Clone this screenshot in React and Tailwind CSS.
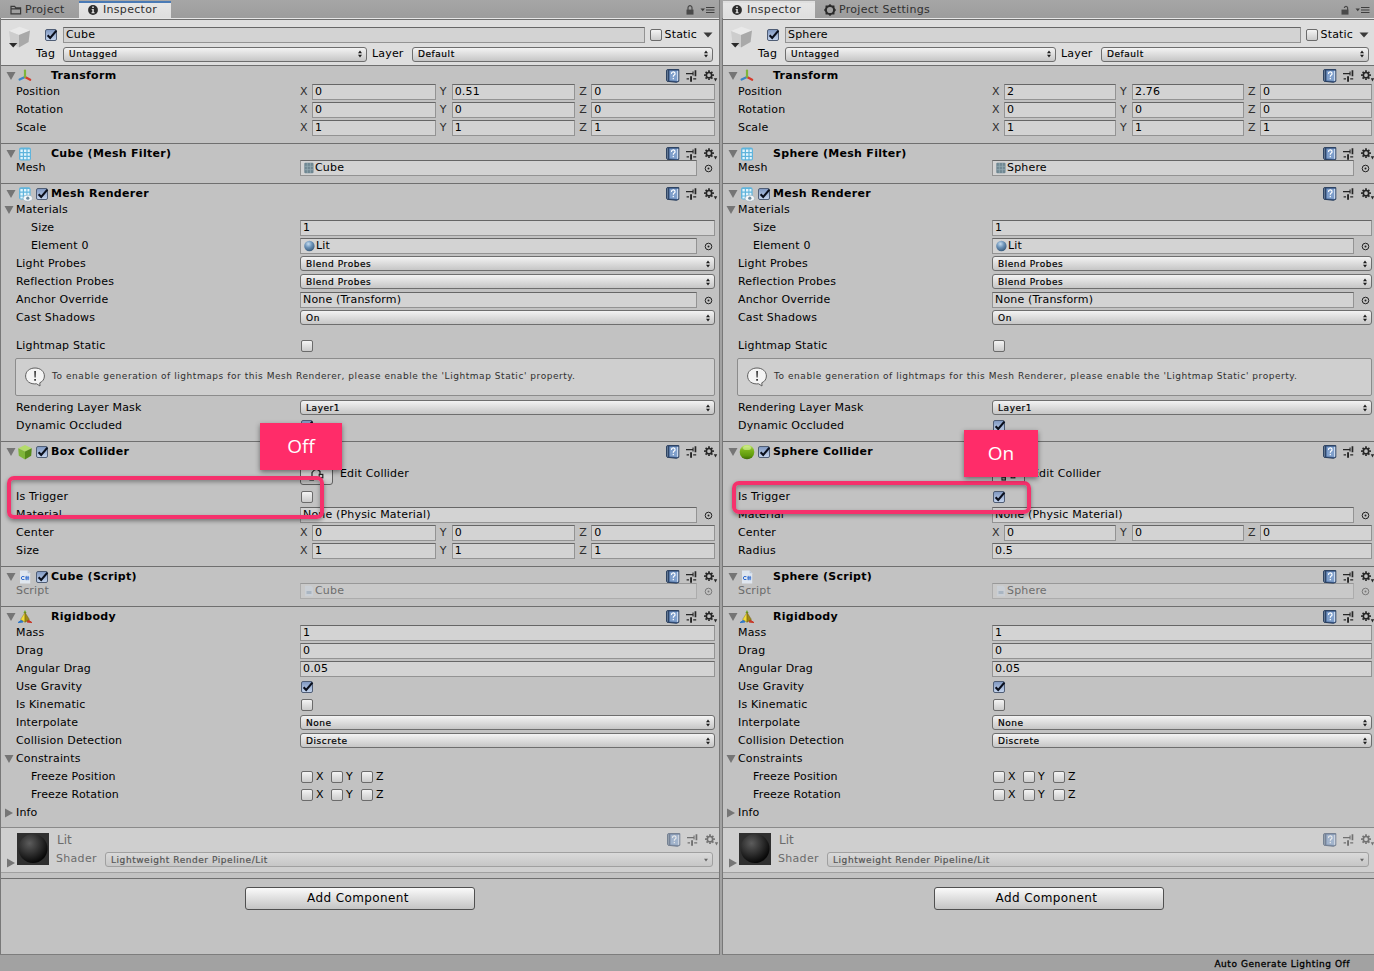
import clsx from "clsx";

const textNormal = "text-[11px] leading-[14px] tracking-[0.17px] whitespace-nowrap";
const textSmall =
  "text-[9px] leading-[12px] tracking-[0.55px] whitespace-nowrap [-webkit-text-stroke:0.2px]";

/* ---------- icons ---------- */

function Foldout({ open = true, className }) {
  return (
    <svg width="10" height="10" viewBox="0 0 10 10" className={clsx("shrink-0", className)}>
      <path d={open ? "M0.5 1 H9.5 L5 9 Z" : "M1 0.5 V9.5 L9 5 Z"} fill="#757575" />
    </svg>
  );
}

function FolderIcon() {
  return (
    <svg width="12" height="10" viewBox="0 0 12 10" fill="none" stroke="#3a3a3a" strokeWidth="1.2">
      <path d="M1 8.9 V1.3 H4.6 L5.8 2.8 H10.6 V8.9 Z M1 3.8 H10.6" />
    </svg>
  );
}

function InfoIcon() {
  return (
    <svg width="10" height="10" viewBox="0 0 10 10">
      <circle cx="5" cy="5" r="4.9" fill="#2b2b2b" />
      <path d="M4.2 1.6 H5.8 V3 H4.2 Z M3.6 4 H5.8 V7.3 H6.6 V8.2 H3.5 V7.3 H4.3 V4.8 H3.6 Z" fill="#e4e4e4" />
    </svg>
  );
}

function SettingsIcon() {
  return (
    <svg width="12" height="12" viewBox="0 0 12 12">
      <path
        d="M6 0 L7.8 1.4 L10.4 1.6 L10.6 4 L12 6 L10.6 8 L10.4 10.4 L7.8 10.6 L6 12 L4.2 10.6 L1.6 10.4 L1.4 8 L0 6 L1.4 4 L1.6 1.6 L4.2 1.4 Z M6 2.9 A3.1 3.1 0 1 0 6 9.1 A3.1 3.1 0 1 0 6 2.9 Z"
        fill="#2b2b2b"
        fillRule="evenodd"
      />
    </svg>
  );
}

function LockIcon({ open }) {
  return (
    <svg width="8" height="10" viewBox="0 0 8 10">
      <rect x="0.5" y="4.6" width="7" height="5" fill="#4a4a4a" />
      <path
        d={open ? "M3.4 3 V2.6 A1.7 1.9 0 0 1 6.6 2.6 V5" : "M2 5 V2.8 A2 2.1 0 0 1 6 2.8 V5"}
        fill="none"
        stroke="#4a4a4a"
        strokeWidth="1.2"
      />
    </svg>
  );
}

function MenuIcon() {
  return (
    <svg width="15" height="8" viewBox="0 0 15 8" fill="#3f3f3f">
      <path d="M0.5 2.5 H5 L2.75 5.2 Z M6 1 H14.5 V2 H6 Z M6 3.5 H14.5 V4.5 H6 Z M6 6 H14.5 V7 H6 Z" />
    </svg>
  );
}

function HelpIcon() {
  return (
    <svg width="14" height="14" viewBox="0 0 14 14">
      <path d="M0.5 1.2 L2 0.5 V12.6 L0.5 11.6 Z" fill="#cfe0f5" stroke="#1d3353" strokeWidth="0.9" />
      <path d="M2.2 0.6 H12.8 V12.2 L10.6 13.3 L2.2 12.4 Z" fill="#41608f" stroke="#1d3353" strokeWidth="0.9" />
      <path d="M3.6 1.8 H11 V12 L3.6 11.4 Z" fill="#7f9fcb" />
      <path d="M11 1.8 H12.3 V11.6 L11 12.2 Z" fill="#c8d8ee" />
      <path d="M5.5 5 A1.8 1.7 0 1 1 8 6.2 Q7.3 6.7 7.3 7.8" fill="none" stroke="#fff" strokeWidth="1.2" />
      <rect x="6.7" y="8.9" width="1.2" height="1.3" fill="#fff" />
    </svg>
  );
}

function PresetIcon() {
  return (
    <svg width="11" height="12" viewBox="0 0 11 12" fill="#262626">
      <path d="M0 3 H6.5 V4.3 H0 Z M6.5 1.6 H7.6 V5.6 H6.5 Z M8.6 0.3 H10.3 V6.2 H8.6 Z M0.6 8.3 H3 V9.6 H0.6 Z M4.1 6.2 H6 V11.8 H4.1 Z M7.2 8.3 H10.2 V9.6 H7.2 Z" />
    </svg>
  );
}

function GearIcon() {
  return (
    <svg width="14" height="12" viewBox="0 0 14 12">
      <g stroke="#262626" fill="none">
        <circle cx="5" cy="5.2" r="2.7" strokeWidth="1.7" />
        <path
          strokeWidth="1.7"
          d="M5 0.3 V2 M5 8.4 V10.1 M0.1 5.2 H1.8 M8.2 5.2 H9.9 M1.6 1.8 L2.8 3 M7.2 7.4 L8.4 8.6 M8.4 1.8 L7.2 3 M2.8 7.4 L1.6 8.6"
        />
      </g>
      <path d="M9.8 8.2 H13.2 L11.5 11.4 Z" fill="#262626" />
    </svg>
  );
}

function GameObjectIcon() {
  return (
    <svg width="24" height="24" viewBox="0 0 24 24">
      <path d="M1 5 L11.5 0.8 L22 4.6 L11 9 Z" fill="#e9e9e9" />
      <path d="M1 5 L11 9 V21.6 L2.4 16.4 Z" fill="#cdcdcd" />
      <path d="M22 4.6 L11 9 V21.6 L20.6 16 Z" fill="#a9a9a9" />
      <path d="M1 17 H9.4 L5.2 21.4 Z" fill="#2a2a2a" />
    </svg>
  );
}

function TransformIcon() {
  return (
    <svg width="16" height="16" viewBox="0 0 16 16" fill="none" strokeWidth="2.2" strokeLinecap="round">
      <path d="M8 9 L2.6 11.6" stroke="#3d86c6" />
      <path d="M8 9 L13.2 11.8" stroke="#d63b2c" />
      <path d="M8 9 V2.6" stroke="#7fb53a" />
    </svg>
  );
}

function MeshFilterIcon() {
  return (
    <svg width="16" height="16" viewBox="0 0 16 16">
      <rect x="2" y="1.5" width="12" height="13" rx="2" fill="#5fb4dc" />
      <path
        d="M3.4 3.4 H5.8 V6 H3.4 Z M7 3.4 H9.4 V6 H7 Z M10.6 3.4 H12.8 V6 H10.6 Z M3.4 7.2 H5.8 V9.8 H3.4 Z M7 7.2 H9.4 V9.8 H7 Z M10.6 7.2 H12.8 V9.8 H10.6 Z M3.4 11 H5.8 V13.2 H3.4 Z M7 11 H9.4 V13.2 H7 Z M10.6 11 H12.8 V13.2 H10.6 Z"
        fill="#e3f5fd"
      />
    </svg>
  );
}

function MeshRendererIcon() {
  return (
    <svg width="16" height="16" viewBox="0 0 16 16">
      <rect x="2" y="1.2" width="11.6" height="12.4" rx="2" fill="#5fb4dc" />
      <path
        d="M3.4 3 H5.8 V5.6 H3.4 Z M7 3 H9.4 V5.6 H7 Z M10.4 3 H12.4 V5.6 H10.4 Z M3.4 6.8 H5.8 V9.4 H3.4 Z M7 6.8 H9.4 V9.4 H7 Z M10.4 6.8 H12.4 V9.4 H10.4 Z M3.4 10.6 H5.8 V12.6 H3.4 Z"
        fill="#e3f5fd"
      />
      <ellipse cx="10.8" cy="12.2" rx="4.6" ry="3" fill="#f6f8fa" stroke="#8ea9b8" strokeWidth="0.5" />
      <circle cx="10.8" cy="12.2" r="1.6" fill="#6e8ea2" />
    </svg>
  );
}

function BoxIcon() {
  return (
    <svg width="16" height="16" viewBox="0 0 16 16">
      <path d="M1.2 4.2 L8 1 L14.8 4.2 L8 7.4 Z" fill="#b4dc6a" />
      <path d="M1.2 4.2 L8 7.4 V15.4 L1.8 11.8 Z" fill="#7fb53a" />
      <path d="M14.8 4.2 L8 7.4 V15.4 L14.2 11.8 Z" fill="#568a1c" />
    </svg>
  );
}

function SphereIcon() {
  return (
    <svg width="16" height="16" viewBox="0 0 16 16">
      <defs>
        <linearGradient id="sphereGreen" x1="0" y1="0" x2="0" y2="1">
          <stop offset="0" stopColor="#c9ea7c" />
          <stop offset="0.35" stopColor="#7db61c" />
          <stop offset="0.75" stopColor="#5f9a0c" />
          <stop offset="1" stopColor="#3d6b05" />
        </linearGradient>
      </defs>
      <circle cx="8" cy="8" r="7.3" fill="url(#sphereGreen)" />
      <ellipse cx="8" cy="3.9" rx="4" ry="2.2" fill="#d9f39c" opacity="0.6" />
    </svg>
  );
}

function ScriptIcon() {
  return (
    <svg width="16" height="16" viewBox="0 0 16 16">
      <path d="M3 1.5 H10.6 L13.2 4.2 V14.5 H3 Z" fill="#dfe6ef" />
      <path d="M10.6 1.5 V4.2 H13.2 Z" fill="#b9c6d6" />
      <g fill="none" stroke="#2f6bd0" strokeWidth="1">
        <path d="M7.4 7.6 Q4.2 6.8 4.2 9 Q4.2 11.3 7.4 10.5" />
        <path d="M9.3 6.9 V11.2 M11.1 6.9 V11.2 M8.2 8.3 H12.2 M8.2 9.9 H12.2" strokeWidth="0.8" />
      </g>
    </svg>
  );
}

function RigidbodyIcon() {
  return (
    <svg width="16" height="16" viewBox="0 0 16 16">
      <path d="M8 1 L9.6 4 H6.4 Z" fill="#6fae2c" />
      <path d="M1 13.6 L5 10.8 L6 13 Z" fill="#2f78c8" stroke="#2f78c8" strokeWidth="1" />
      <path d="M15 13.6 L11 10.8 L10 13 Z" fill="#c83a2a" stroke="#c83a2a" strokeWidth="1" />
      <path d="M8 3.4 L3.6 10.4 L8 13.2 Z" fill="#f4dd3a" stroke="#7a6a10" strokeWidth="0.4" />
      <path d="M8 3.4 L12.4 10.4 L8 13.2 Z" fill="#a08a14" stroke="#5b4e0a" strokeWidth="0.4" />
    </svg>
  );
}

function MiniMesh() {
  return (
    <svg width="10" height="12" viewBox="0 0 10 12">
      <rect x="0.3" y="0.8" width="9.2" height="10.4" rx="1" fill="#6f8792" />
      <path d="M3.3 1 V11 M6.4 1 V11 M0.5 4.3 H9.3 M0.5 7.7 H9.3" stroke="#93a9b3" strokeWidth="0.8" />
    </svg>
  );
}

function MiniMaterial() {
  return (
    <svg width="11" height="12" viewBox="0 0 11 12">
      <defs>
        <radialGradient id="matBlue" cx="0.4" cy="0.3" r="0.7">
          <stop offset="0" stopColor="#c4dcf0" />
          <stop offset="0.5" stopColor="#6c93b8" />
          <stop offset="1" stopColor="#3d5f80" />
        </radialGradient>
      </defs>
      <circle cx="5.4" cy="6" r="5.2" fill="url(#matBlue)" />
    </svg>
  );
}

function MiniScript() {
  return (
    <svg width="10" height="12" viewBox="0 0 10 12">
      <path d="M1 0.8 H7 L9 2.8 V11.2 H1 Z" fill="#d5e0ec" />
      <path d="M2.5 6 H7.5 V9 H2.5 Z" fill="#8da6c4" />
    </svg>
  );
}

function BubbleIcon() {
  return (
    <svg width="22" height="22" viewBox="0 0 22 22">
      <path
        d="M11 2 C16.4 2 20.4 5.4 20.4 10 C20.4 13.2 18.6 15.6 15.8 16.8 L16 20 L12.6 17.8 C6 18.6 1.6 15 1.6 10 C1.6 5.4 5.6 2 11 2 Z"
        fill="#f4f4f4"
        stroke="#5f5f5f"
        strokeWidth="1"
      />
      <path d="M10.2 5 H12 L11.7 11.6 H10.5 Z M10.2 13 H12 V14.8 H10.2 Z" fill="#3c3c3c" />
    </svg>
  );
}

function EditColliderIcon() {
  return (
    <svg width="17" height="15" viewBox="0 0 17 15" fill="none" stroke="#222" strokeWidth="1.2">
      <path d="M4 12.5 V6.5 Q8 1 12 5.5 V8.5" />
      <rect x="2" y="11" width="3.4" height="3" />
      <rect x="11.2" y="8.4" width="3.6" height="3.4" />
    </svg>
  );
}

/* ---------- controls ---------- */

function Checkbox({ checked }) {
  return (
    <span
      className={clsx(
        "block w-3 h-3 shrink-0 rounded-[2px] border",
        checked
          ? "border-[#4f5d75] bg-linear-to-b from-[#8199c2] to-[#c3d3ec]"
          : "border-[#6b6b6b] bg-linear-to-b from-[#f4f4f4] to-[#cbcbcb]"
      )}
    >
      {checked && (
        <svg width="13" height="12" viewBox="0 0 13 12" className="block -mt-px -ml-px">
          <path d="M2.6 6.2 L5.2 9 L11.4 1.6" fill="none" stroke="#0a0f1c" strokeWidth="2.1" />
        </svg>
      )}
    </span>
  );
}

function Field({ children, className }) {
  return (
    <div
      className={clsx(
        "h-4 min-w-0 flex-1 flex items-center gap-px pl-[2px] bg-[#d3d3d3] border border-[#939393] border-t-[#666666]",
        textNormal,
        className
      )}
    >
      {children}
    </div>
  );
}

function Select({ children, muted, className }) {
  return (
    <div
      className={clsx(
        "h-[15px] min-w-0 flex items-center justify-between pl-[5px] pr-[3px] rounded-[3px] border",
        muted
          ? "border-[#a0a0a0] bg-linear-to-b from-[#dadada] to-[#c6c6c6] text-[#555]"
          : "border-[#6e6e6e] bg-linear-to-b from-[#f3f3f3] to-[#c6c6c6]",
        textSmall,
        className
      )}
    >
      <span>{children}</span>
      <svg width="6" height="8" viewBox="0 0 6 8" fill={muted ? "#666" : "#1c1c1c"}>
        <path d={muted ? "M1 2.8 H5 L3 5.6 Z" : "M1 3.2 L3 0.4 L5 3.2 Z M1 4.8 H5 L3 7.6 Z"} />
      </svg>
    </div>
  );
}

function Row({ label, indent, foldout, muted, children }) {
  return (
    <div className="h-[18px] flex items-center">
      <div
        className={clsx(
          "w-(--label) shrink-0 flex items-center",
          textNormal,
          muted && "text-[#6b6b6b]",
          indent ? "pl-[30px]" : foldout ? "pl-[3px]" : "pl-[15px]"
        )}
      >
        {foldout && <Foldout open={foldout === "open"} className="mr-[2px]" />}
        {label}
      </div>
      {children}
    </div>
  );
}

function TextRow({ value, ...rest }) {
  return (
    <Row {...rest}>
      <Field>{value}</Field>
    </Row>
  );
}

function SelectRow({ value, ...rest }) {
  return (
    <Row {...rest}>
      <Select className="flex-1 mb-px">{value}</Select>
    </Row>
  );
}

function CheckRow({ checked, ...rest }) {
  return (
    <Row {...rest}>
      <div className="pl-px">
        <Checkbox checked={checked} />
      </div>
    </Row>
  );
}

function ObjectRow({ icon, value, muted, ...rest }) {
  return (
    <Row muted={muted} {...rest}>
      <div className={clsx("flex-1 flex items-center", muted && "opacity-45")}>
        <Field>
          {icon && <span className="pl-px">{icon}</span>}
          {value}
        </Field>
        <svg width="9" height="9" viewBox="0 0 9 9" className="ml-[7px] mr-[2px]">
          <circle cx="4.5" cy="4.5" r="3.3" fill="none" stroke="#222" strokeWidth="1" />
          <circle cx="4.5" cy="4.5" r="1" fill="#222" />
        </svg>
      </div>
    </Row>
  );
}

function VectorRow({ label, values }) {
  return (
    <Row label={label}>
      <div className="flex-1 grid grid-cols-3 gap-1">
        {["X", "Y", "Z"].map((axis, i) => (
          <div key={axis} className="flex items-center min-w-0">
            <span className={clsx("w-3 shrink-0 text-[#2e2e2e]", textNormal)}>{axis}</span>
            <Field>{values[i]}</Field>
          </div>
        ))}
      </div>
    </Row>
  );
}

function FreezeRow({ label }) {
  return (
    <Row label={label} indent>
      <div className={clsx("flex pl-px", textNormal)}>
        {["X", "Y", "Z"].map((axis) => (
          <span key={axis} className="w-[30px] flex items-center gap-[3px]">
            <Checkbox />
            {axis}
          </span>
        ))}
      </div>
    </Row>
  );
}

function HeaderIcons() {
  return (
    <div className="ml-auto -mr-[3px] flex items-center">
      <HelpIcon />
      <span className="ml-[6px]">
        <PresetIcon />
      </span>
      <span className="ml-[7px]">
        <GearIcon />
      </span>
    </div>
  );
}

function Component({ title, icon, enabled, tight, height, children }) {
  return (
    <section
      className={clsx("border-t border-[#6f6f6f] pr-(--edge) overflow-hidden", height)}
    >
      <div className={clsx("flex items-center pl-[5px]", tight ? "h-[15px] pt-[4px]" : "h-[17px] pt-[2px]")}>
        <Foldout />
        <span className="ml-px w-4">{icon}</span>
        <span className="ml-[3px] w-[15px]">{enabled && <Checkbox checked />}</span>
        <h2 className="font-bold text-[11px] leading-[14px] tracking-[0.3px] whitespace-nowrap">{title}</h2>
        <HeaderIcons />
      </div>
      {children}
    </section>
  );
}

/* ---------- panel ---------- */

function Tab({ active, focused, icon, children, className }) {
  return (
    <div
      className={clsx(
        "h-[17px] mt-px flex items-center border-t-2 pb-px text-[11px] tracking-[0.3px] whitespace-nowrap text-[#303030]",
        active ? "bg-linear-to-b from-[#e6e6e6] to-[#dedede]" : "",
        focused ? "border-[#4a7ab5]" : "border-transparent",
        className
      )}
    >
      {icon}
      {children}
    </div>
  );
}

function Inspector({ tabs, locked, name, collider, colliderIcon, trigger, shape, scriptEnabled, position, className, children }) {
  return (
    <div className={clsx("relative flex flex-col h-[955px] overflow-hidden bg-[#c2c2c2] border-b border-[#7d7d7d]", className)}>
      <div className="h-[18px] shrink-0 flex bg-linear-to-b from-[#a6a6a6] to-[#9c9c9c]">
        {tabs}
        <div className="ml-auto mr-(--tools) mt-px flex items-center gap-[6px]">
          <LockIcon open={!locked} />
          <MenuIcon />
        </div>
      </div>
      <div className="flex-1 flex flex-col border-l border-[#787878]">
        <header className="h-[47px] shrink-0 bg-[#dedede] border-t border-[#e6e6e6]">
          <div className="border-t border-[#6f6f6f] h-[46px] flex pl-[7px] pt-[6px] pr-(--header)">
            <GameObjectIcon />
            <div className="flex-1 flex flex-col">
              <div className="h-[18px] flex items-center">
                <span className="ml-[13px] mr-[6px]">
                  <Checkbox checked />
                </span>
                <Field className="tracking-[0.3px]">{name}</Field>
                <span className="ml-[5px] mr-[3px]">
                  <Checkbox />
                </span>
                <span className={textNormal}>Static</span>
                <svg width="10" height="6" viewBox="0 0 10 6" className="ml-[6px]">
                  <path d="M0.5 0.5 H9.5 L5 5.5 Z" fill="#3a3a3a" />
                </svg>
              </div>
              <div className="h-5 flex items-center">
                <span className={clsx("w-[31px] pl-[4px]", textNormal)}>Tag</span>
                <Select className="grow basis-[13px] ">Untagged</Select>
                <span className={clsx("w-[45px] pl-[5px]", textNormal)}>Layer</span>
                <Select className="grow basis-0">Default</Select>
              </div>
            </div>
          </div>
        </header>

        <Component title="Transform" icon={<TransformIcon />} height="h-[78px]">
          <VectorRow label="Position" values={position} />
          <VectorRow label="Rotation" values={["0", "0", "0"]} />
          <VectorRow label="Scale" values={["1", "1", "1"]} />
        </Component>

        <Component title={`${name} (Mesh Filter)`} icon={<MeshFilterIcon />} tight height="h-[40px]">
          <ObjectRow label="Mesh" icon={<MiniMesh />} value={name} />
        </Component>

        <Component title="Mesh Renderer" icon={<MeshRendererIcon />} enabled height="h-[258px]">
          <Row label="Materials" foldout="open" />
          <TextRow label="Size" indent value="1" />
          <ObjectRow label="Element 0" indent icon={<MiniMaterial />} value="Lit" />
          <SelectRow label="Light Probes" value="Blend Probes" />
          <SelectRow label="Reflection Probes" value="Blend Probes" />
          <ObjectRow label="Anchor Override" value="None (Transform)" />
          <SelectRow label="Cast Shadows" value="On" />
          <div className="pt-[10px]">
            <CheckRow label="Lightmap Static" />
          </div>
          <div className="mt-[3px] mb-[3px] ml-[14px] h-[38px] flex items-center gap-[6px] pl-[8px] rounded-[2px] border border-[#8c8c8c] bg-[#cfcfcf]">
            <BubbleIcon />
            <p className="text-[9px] tracking-[0.55px] whitespace-nowrap text-[#2e2e2e]">
              To enable generation of lightmaps for this Mesh Renderer, please enable the 'Lightmap Static' property.
            </p>
          </div>
          <SelectRow label="Rendering Layer Mask" value="Layer1" />
          <CheckRow label="Dynamic Occluded" checked />
        </Component>

        <Component title={collider} icon={colliderIcon} enabled height="h-[125px]">
          <div className="h-[29px] flex items-center pl-(--label)">
            <span className="w-[33px] h-[23px] flex items-center justify-center rounded-[3px] border border-[#5f5f5f] bg-linear-to-b from-[#f0f0f0] to-[#c6c6c6]">
              <EditColliderIcon />
            </span>
            <span className={clsx("pl-[7px]", textNormal)}>Edit Collider</span>
          </div>
          <CheckRow label="Is Trigger" checked={trigger} />
          <ObjectRow label="Material" value="None (Physic Material)" />
          <VectorRow label="Center" values={["0", "0", "0"]} />
          {shape}
        </Component>

        <Component title={`${name} (Script)`} icon={<ScriptIcon />} enabled={scriptEnabled} tight height="h-[40px]">
          <ObjectRow label="Script" icon={<MiniScript />} value={name} muted />
        </Component>

        <Component title="Rigidbody" icon={<RigidbodyIcon />} height="h-[221px]">
          <TextRow label="Mass" value="1" />
          <TextRow label="Drag" value="0" />
          <TextRow label="Angular Drag" value="0.05" />
          <CheckRow label="Use Gravity" checked />
          <CheckRow label="Is Kinematic" />
          <SelectRow label="Interpolate" value="None" />
          <SelectRow label="Collision Detection" value="Discrete" />
          <Row label="Constraints" foldout="open" />
          <FreezeRow label="Freeze Position" />
          <FreezeRow label="Freeze Rotation" />
          <Row label="Info" foldout="closed" />
        </Component>

        <section className="h-[46px] border-y border-t-[#8a8a8a] border-b-[#a0a0a0] bg-[#cfcfcf] flex pl-[5px] pr-(--header) text-[#6b6b6b]">
          <Foldout open={false} className="mt-[30px]" />
          <svg width="32" height="32" viewBox="0 0 32 32" className="mt-[5px] ml-px">
            <defs>
              <radialGradient id="litBall" cx="0.38" cy="0.32" r="0.68">
                <stop offset="0" stopColor="#5c5c5c" />
                <stop offset="0.5" stopColor="#333333" />
                <stop offset="1" stopColor="#080808" />
              </radialGradient>
            </defs>
            <rect width="32" height="32" fill="#2f2f2f" />
            <circle cx="16" cy="15.5" r="14.5" fill="url(#litBall)" />
          </svg>
          <div className="flex-1 ml-[7px]">
            <div className="h-6 flex items-center">
              <span className="text-xs ml-px">Lit</span>
              <div className="ml-auto -mr-[3px] opacity-55">
                <HeaderIcons />
              </div>
            </div>
            <div className="h-[15px] flex items-center">
              <span className="w-[49px] text-[11px] tracking-[0.3px]">Shader</span>
              <Select muted className="flex-1">
                Lightweight Render Pipeline/Lit
              </Select>
            </div>
          </div>
        </section>

        <footer className="mt-[5px] flex-1 border-t border-[#6f6f6f] pt-2 flex justify-center pr-(--footer)">
          <button className="w-[230px] h-[23px] rounded-[3px] border border-[#505050] bg-linear-to-b from-[#fafafa] to-[#c4c4c4] text-[12px] leading-[14px] tracking-[0.4px] pb-px pr-1">
            Add Component
          </button>
        </footer>
      </div>
      {children}
    </div>
  );
}

function Callout({ tagClass, frameClass, children }) {
  return (
    <>
      <div
        className={clsx(
          "absolute rounded-[7px] border-4 border-[#f5316c] shadow-[0_2px_4px_rgba(0,0,0,0.4),inset_0_2px_4px_rgba(0,0,0,0.35)]",
          frameClass
        )}
      />
      <div
        className={clsx(
          "absolute flex items-center justify-center bg-[#ff2c69] text-white text-[19px] font-['Open_Sans',sans-serif] shadow-[0_2px_5px_rgba(0,0,0,0.45)]",
          tagClass
        )}
      >
        {children}
      </div>
    </>
  );
}

export default function App() {
  return (
    <div className="w-[1374px] h-[971px] overflow-hidden bg-[#a2a2a2] text-black font-['DejaVu_Sans',Verdana,sans-serif]">
      <div className="flex gap-[2px]">
        <Inspector
          className="w-[720px] border-r border-r-[#787878] [--label:299px] [--edge:4px] [--header:6px] [--tools:4px] [--footer:0px]"
          tabs={
            <>
              <Tab icon={<FolderIcon />} className="w-[79px] pl-[10px] gap-[3px]">
                Project
              </Tab>
              <Tab active focused icon={<InfoIcon />} className="w-[92px] pl-[9px] gap-[5px]">
                Inspector
              </Tab>
            </>
          }
          locked
          name="Cube"
          position={["0", "0.51", "0"]}
          collider="Box Collider"
          colliderIcon={<BoxIcon />}
          trigger={false}
          shape={<VectorRow label="Size" values={["1", "1", "1"]} />}
          scriptEnabled
        >
          <Callout frameClass="left-[7px] top-[476px] w-[317px] h-[43px]" tagClass="left-[260px] top-[423px] w-[82px] h-[47px]">
            Off
          </Callout>
        </Inspector>

        <Inspector
          className="w-[652px] [--label:269px] [--edge:2px] [--header:5px] [--tools:4px] [--footer:0px]"
          tabs={
            <>
              <Tab active icon={<InfoIcon />} className="w-[92px] ml-px pl-[9px] gap-[5px]">
                Inspector
              </Tab>
              <Tab icon={<SettingsIcon />} className="pl-[9px] gap-[3px]">
                Project Settings
              </Tab>
            </>
          }
          name="Sphere"
          position={["2", "2.76", "0"]}
          collider="Sphere Collider"
          colliderIcon={<SphereIcon />}
          trigger
          shape={<TextRow label="Radius" value="0.5" />}
        >
          <Callout frameClass="left-[10px] top-[481px] w-[299px] h-[33px]" tagClass="left-[242px] top-[430px] w-[74px] h-[47px]">
            On
          </Callout>
        </Inspector>
      </div>
      <div className="h-4 flex items-center justify-end pr-[24px] pt-[3px]">
        <span className="text-[9px] tracking-[0.55px] [-webkit-text-stroke:0.3px]">Auto Generate Lighting Off</span>
      </div>
    </div>
  );
}
